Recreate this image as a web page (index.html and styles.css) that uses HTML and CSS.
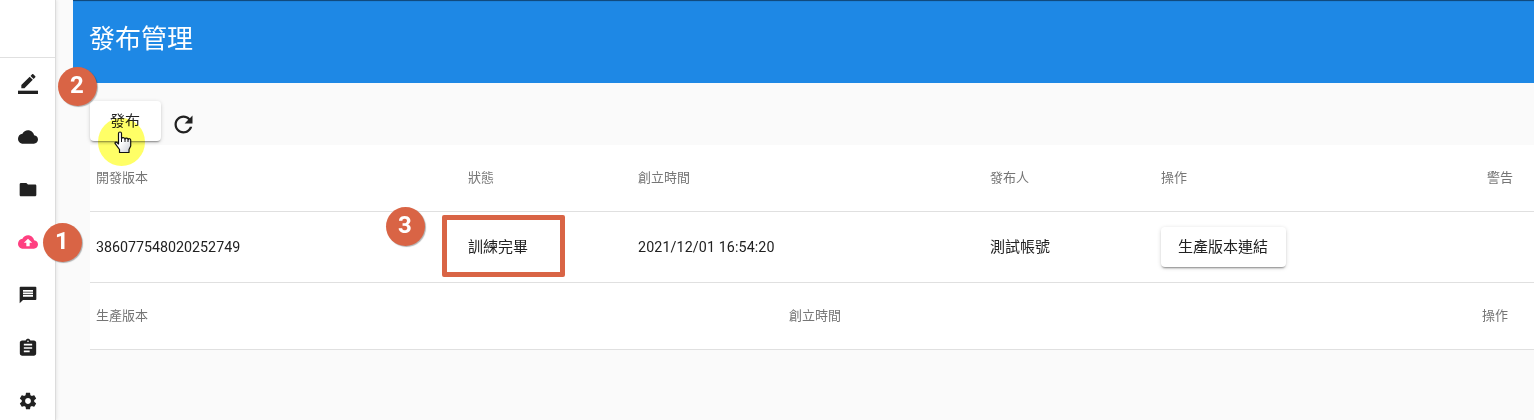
FILE: index.html
```html
<!DOCTYPE html>
<html lang="zh-Hant">
<head>
<meta charset="utf-8">
<title>發布管理</title>
<link rel="stylesheet" href="styles.css">
</head>
<body>
<div class="app">
  <nav class="sidebar">
    <div class="sidebar-head"></div>
    <div class="nav-list">
      <svg class="icon" viewBox="0 0 24 24"><path d="M17.75 7L14 3.25l-10 10V17h3.75l10-10zm2.96-2.96c.39-.39.39-1.02 0-1.41L18.37.29c-.39-.39-1.02-.39-1.41 0L15 2.25 18.75 6l1.96-1.96z"/><path d="M0 20h24v4H0z"/></svg>
      <svg class="icon" viewBox="0 0 24 24"><path d="M19.35 10.04C18.67 6.59 15.64 4 12 4 9.11 4 6.6 5.64 5.35 8.04 2.34 8.36 0 10.91 0 14c0 3.31 2.69 6 6 6h13c2.76 0 5-2.24 5-5 0-2.64-2.05-4.78-4.65-4.96z"/></svg>
      <svg class="icon" viewBox="0 0 24 24"><path d="M10 3.500H3.500c-.8 0-1.490.7-1.490 1.500L2 18c0 1 .7 1.500 1.500 1.500h17c.8 0 1.500-.7 1.500-1.500V7c0-.8-.7-1.500-1.500-1.500H12l-2-2z"/></svg>
      <svg class="icon icon-active" viewBox="0 0 24 24"><path d="M19.35 10.04C18.67 6.59 15.64 4 12 4 9.11 4 6.6 5.64 5.35 8.04 2.34 8.36 0 10.91 0 14c0 3.31 2.69 6 6 6h13c2.76 0 5-2.24 5-5 0-2.64-2.05-4.78-4.65-4.96zM14 13v4h-4v-4H7l5-5 5 5h-3z"/></svg>
      <svg class="icon" viewBox="0 0 24 24"><path d="M21 2H3c-.6 0-.99.4-.99 1L2 22l4-4h15c.6 0 1-.4 1-1V3c0-.6-.4-1-1-1zM6 9h12v2H6V9zm12 5H6v-2h12v2zm0-6H6V6h12v2z"/></svg>
      <svg class="icon" viewBox="0 0 24 24"><path d="M19 3h-4.180C14.400 1.840 13.300 1 12 1c-1.300 0-2.400.84-2.820 2H5C3.300 3 2.200 4.200 2.200 5.500v13c0 1.500 1.300 2.700 2.800 2.700h14c1.500 0 2.800-1.200 2.800-2.700v-13C21.800 4.200 20.700 3 19 3zm-7 0c.55 0 1 .45 1 1s-.45 1-1 1-1-.45-1-1 .45-1 1-1zm2 14H7v-2h7v2zm3-4H7v-2h10v2zm0-4H7V7h10v2z"/></svg>
      <svg class="icon" viewBox="0 0 24 24"><path d="M19.430 12.980c.04-.32.07-.64.07-.98s-.03-.66-.07-.98l2.110-1.650c.19-.15.24-.42.12-.64l-2-3.460c-.12-.22-.39-.3-.61-.22l-2.490 1c-.52-.4-1.080-.73-1.690-.98l-.38-2.650C14.460 2.180 14.250 2 14 2h-4c-.25 0-.46.18-.49.42l-.38 2.650c-.61.25-1.170.59-1.690.98l-2.490-1c-.23-.09-.49 0-.61.22l-2 3.460c-.13.22-.07.49.12.64l2.110 1.650c-.04.32-.07.65-.07.98s.03.66.07.98l-2.110 1.650c-.19.15-.24.42-.12.64l2 3.460c.12.22.39.3.61.22l2.490-1c.52.4 1.080.73 1.690.98l.38 2.650c.03.24.24.42.49.42h4c.25 0 .46-.18.49-.42l.38-2.650c.61-.25 1.170-.59 1.690-.98l2.490 1c.23.09.49 0 .61-.22l2-3.460c.12-.22.07-.49-.12-.64l-2.110-1.650zM12 15.500c-1.930 0-3.500-1.570-3.500-3.500s1.570-3.500 3.500-3.500 3.500 1.570 3.500 3.500-1.570 3.500-3.500 3.500z"/></svg>
    </div>
  </nav>
  <main class="main">
    <header class="page-header">發布管理</header>
    <section class="content">
      <div class="toolbar">
        <button class="btn btn-publish">發布</button>
        <svg class="refresh" viewBox="0 0 24 24"><path d="M17.650 6.350C16.200 4.900 14.210 4 12 4c-4.420 0-7.990 3.580-7.990 8s3.570 8 7.990 8c3.730 0 6.840-2.550 7.730-6h-2.080c-.82 2.330-3.040 4-5.650 4-3.310 0-6-2.690-6-6s2.690-6 6-6c1.660 0 3.140.69 4.220 1.780L13 11h7V4l-2.350 2.350z"/></svg>
      </div>
      <div class="table">
        <div class="row row-dev row-label"><span>開發版本</span><span>狀態</span><span>創立時間</span><span>發布人</span><span>操作</span><span>警告</span></div>
        <div class="row row-dev row-data"><span class="num">386077548020252749</span><span class="cell-text">訓練完畢</span><span class="num num-date">2021/12/01 16:54:20</span><span class="cell-text">測試帳號</span><span><button class="btn btn-link">生產版本連結</button></span><span></span></div>
        <div class="row row-prod row-label"><span>生產版本</span><span>創立時間</span><span>操作</span></div>
      </div>
    </section>
  </main>
  <div class="step step-1">1</div>
  <div class="step step-2">2</div>
  <div class="step step-3">3</div>
  <div class="highlight"></div>
  <div class="click-spot"></div>
  <svg class="pointer" viewBox="0 0 18 23">
    <defs><linearGradient id="hand" x1="0" y1="0" x2="1" y2="1"><stop offset=".45" stop-color="#fff"/><stop offset="1" stop-color="#c9ccd4"/></linearGradient></defs>
    <path fill="url(#hand)" d="M6 1C5 1 4.500 1.700 4.500 2.600V13L2.900 11.500C1.900 10.700.6 11.500 1.200 12.700L5.500 18.500V21.500h9.500v-3l1.700-3.500V9c0-1.600-2.200-1.700-2.500-.3C13.900 6.900 11.400 6.700 11 8.200 10.700 6.300 8 6.200 7.500 7.500V2.600C7.500 1.700 7 1 6 1z"/>
    <path class="pointer-lines" d="M7.500 7v4M11 8v3M14 8.500v2.500"/>
  </svg>
</div>
</body>
</html>
```
FILE: styles.css
```css
* { box-sizing: border-box; }
body {
  margin: 0;
  background: #fafafa;
  color: #212121;
  font-family: Roboto, "Noto Sans CJK TC", sans-serif;
}
.app {
  position: relative;
  display: flex;
  height: 420px;
  overflow: hidden;
}
.sidebar {
  flex: none;
  width: 56px;
  margin-right: 17px;
  background: #fff;
  border-right: 1px solid #dcdcdc;
  box-shadow: 1px 0 3px rgba(0, 0, 0, .08);
}
.sidebar-head { height: 58px; border-bottom: 1px solid #e0e0e0; }
.nav-list {
  display: flex;
  flex-direction: column;
  align-items: center;
  gap: 32.8px;
  padding-top: 16px;
}
.icon { flex: none; width: 20px; height: 20px; fill: #212121; }
.icon-active { fill: #ff4081; }
.main { flex: 1; min-width: 0; }
.page-header {
  height: 83px;
  padding: 0 16px;
  background: #1e88e5;
  box-shadow: inset 0 2px 1px -1px rgba(0, 0, 0, .5);
  color: #fff;
  font-size: 26px;
  line-height: 79px;
}
.content { padding: 18px 0 0 17px; }
.toolbar { display: flex; height: 44px; }
.btn {
  display: block;
  height: 40px;
  padding: 0 1px 0 0;
  border: 0;
  border-radius: 4px;
  background: #fff;
  color: #212121;
  font: 400 15px/38px Roboto, "Noto Sans CJK TC", sans-serif;
  text-align: center;
  box-shadow: 0 2px 2px -1px rgba(0, 0, 0, .4), 0 1px 4px rgba(0, 0, 0, .16);
}
.btn-publish { width: 71px; }
.btn-link { width: 125px; }
.refresh { width: 27px; height: 27px; margin: 9.5px 0 0 8.5px; fill: #212121; }
.table { background: #fff; }
.row {
  display: grid;
  align-items: center;
  padding-left: 6px;
  border-bottom: 1px solid #e0e0e0;
  white-space: nowrap;
}
.row-dev { grid-template-columns: 372px 170px 352px 171px 326px 1fr; }
.row-prod { grid-template-columns: 693px 693px 1fr; }
.row-label { height: 67px; padding-bottom: 4px; color: #757575; font-size: 13px; }
.row-data { height: 71px; font-size: 15px; }
.cell-text { padding-bottom: 4px; }
.num { font-size: 14.25px; }
.num-date { letter-spacing: .12px; }
.step {
  position: absolute;
  width: 39px;
  height: 39px;
  border-radius: 50%;
  background: #d96445;
  color: #fff;
  font: bold 24px/37px Roboto, sans-serif;
  text-align: center;
  box-shadow: 1px 1px 1px rgba(0, 0, 0, .3);
}
.step-1 { left: 42.500px; top: 222.500px; }
.step-2 { left: 57.500px; top: 66.500px; }
.step-3 { left: 385.500px; top: 206.500px; }
.highlight {
  position: absolute;
  left: 441.500px;
  top: 214.500px;
  width: 123px;
  height: 62px;
  border: 5px solid #d96445;
  border-radius: 2px;
}
.click-spot {
  position: absolute;
  left: 98px;
  top: 118px;
  width: 47px;
  height: 48px;
  border-radius: 50%;
  background: #ffff66;
  mix-blend-mode: multiply;
}
.pointer {
  position: absolute;
  left: 114px;
  top: 131px;
  width: 18px;
  height: 23px;
  stroke: #111;
  stroke-width: 1.2;
  stroke-linejoin: round;
}
.pointer-lines { fill: none; stroke-width: 1; }
```
